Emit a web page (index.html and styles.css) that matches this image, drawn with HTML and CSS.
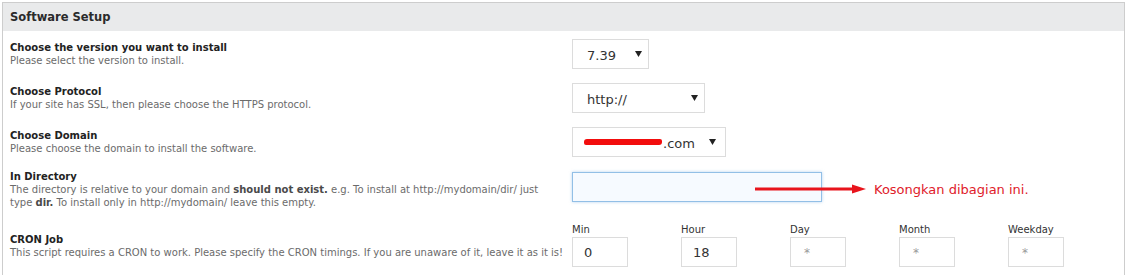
FILE: index.html
```html
<!DOCTYPE html>
<html lang="en">
<head>
<meta charset="utf-8">
<title>Software Setup</title>
<link rel="stylesheet" href="styles.css">
</head>
<body>
<div class="panel">
  <div class="panel-head">Software Setup</div>
  <div class="rows">
    <div class="row">
      <div class="label">
        <div class="label-title">Choose the version you want to install</div>
        <div class="label-desc">Please select the version to install.</div>
      </div>
      <div class="field">
        <div class="select select-version">
          <span class="select-value">7.39</span>
          <svg class="caret" width="7" height="6" viewBox="0 0 7 6"><polygon points="0,0 7,0 3.5,6" fill="#222"/></svg>
        </div>
      </div>
    </div>
    <div class="row">
      <div class="label">
        <div class="label-title">Choose Protocol</div>
        <div class="label-desc">If your site has SSL, then please choose the HTTPS protocol.</div>
      </div>
      <div class="field">
        <div class="select select-protocol">
          <span class="select-value">http://</span>
          <svg class="caret" width="7" height="6" viewBox="0 0 7 6"><polygon points="0,0 7,0 3.5,6" fill="#222"/></svg>
        </div>
      </div>
    </div>
    <div class="row">
      <div class="label">
        <div class="label-title">Choose Domain</div>
        <div class="label-desc">Please choose the domain to install the software.</div>
      </div>
      <div class="field">
        <div class="select select-domain">
          <span class="select-value"><span class="redact"></span>.com</span>
          <svg class="caret" width="7" height="6" viewBox="0 0 7 6"><polygon points="0,0 7,0 3.5,6" fill="#222"/></svg>
        </div>
      </div>
    </div>
    <div class="row row-dir">
      <div class="label">
        <div class="label-title">In Directory</div>
        <div class="label-desc label-desc-dir">The directory is relative to your domain and <b>should not exist.</b> e.g. To install at http://mydomain/dir/ just type <b>dir.</b> To install only in http://mydomain/ leave this empty.</div>
      </div>
      <div class="field field-dir">
        <div class="text-input text-input-focus"></div>
        <div class="note">
          <svg class="note-arrow" width="111" height="10" viewBox="0 0 111 10"><rect x="0" y="3.5" width="99" height="3" fill="#e8141c"/><polygon points="97,0.5 111,5 97,9.5" fill="#e8141c"/></svg>
          <span class="note-text">Kosongkan dibagian ini.</span>
        </div>
      </div>
    </div>
    <div class="row row-cron">
      <div class="label">
        <div class="label-title">CRON Job</div>
        <div class="label-desc">This script requires a CRON to work. Please specify the CRON timings. If you are unaware of it, leave it as it is!</div>
      </div>
      <div class="field cron">
        <div class="cron-item"><div class="cron-label">Min</div><div class="cron-box">0</div></div>
        <div class="cron-item"><div class="cron-label">Hour</div><div class="cron-box">18</div></div>
        <div class="cron-item"><div class="cron-label">Day</div><div class="cron-box cron-star">*</div></div>
        <div class="cron-item"><div class="cron-label">Month</div><div class="cron-box cron-star">*</div></div>
        <div class="cron-item"><div class="cron-label">Weekday</div><div class="cron-box cron-star">*</div></div>
      </div>
    </div>
  </div>
</div>
</body>
</html>
```
FILE: styles.css
```css
* { box-sizing: border-box; }
html, body { margin: 0; padding: 0; background: #fff; }
body { font-family: "DejaVu Sans", Verdana, sans-serif; color: #222; }

.panel {
  margin: 2px 1px 0 2px;
  border: 1px solid #cdcdcd;
  border-bottom: none;
  height: 273px;
  overflow: hidden;
}
.panel-head {
  height: 28px;
  line-height: 28px;
  padding-left: 7px;
  background: #e9eaeb;
  font-weight: bold;
  font-size: 11.5px;
  color: #2b2b2b;
}
.rows { padding-top: 1px; }
.row {
  display: grid;
  grid-template-columns: 562px 1fr;
  align-items: center;
  min-height: 44px;
  padding-left: 7px;
}
.label-title {
  font-size: 10px;
  font-weight: bold;
  line-height: 12px;
  color: #222;
}
.label-desc {
  font-size: 10px;
  line-height: 13px;
  color: #6b6b6b;
}
.label-desc b { color: #4a4a4a; }
.label-desc-dir { max-width: 548px; }

.field { position: relative; }

.select {
  height: 30px;
  border: 1px solid #dcdcdc;
  display: flex;
  align-items: center;
  justify-content: space-between;
  padding: 2px 6px 0 14px;
  font-size: 13px;
  color: #333;
  background: #fff;
}
.select .caret { margin-top: -3px; }
.select-version { width: 77px; }
.select-protocol { width: 133px; }
.select-domain { width: 154px; padding-right: 9px; padding-left: 11px; }
.select-value { display: flex; align-items: center; }
.redact {
  display: inline-block;
  width: 78px;
  height: 6px;
  margin-top: -2px;
  margin-right: 1px;
  background: #f20d0d;
  border-radius: 3px 2px 3px 2px;
}

.row-dir { align-items: start; }
.row-dir .label { margin-top: 7px; }
.row-dir .field { margin-top: 8px; }

.text-input {
  width: 250px;
  height: 30px;
  border: 1px solid #92bfe6;
  background: #f6faff;
}
.text-input-focus { box-shadow: 0 0 3px rgba(120, 175, 225, 0.55); }

.note {
  position: absolute;
  left: 183px;
  top: 7px;
  height: 20px;
  display: flex;
  align-items: center;
  white-space: nowrap;
}
.note-text {
  margin-left: 8px;
  font-size: 13px;
  color: #e0202a;
}

.row-cron { padding-top: 15px; align-items: start; }
.row-cron .label { align-self: center; margin-top: 2px; }
.cron {
  display: grid;
  grid-template-columns: repeat(5, 109px);
}
.cron-label {
  font-size: 10px;
  line-height: 12px;
  height: 13px;
  color: #333;
}
.cron-box {
  width: 56px;
  height: 30px;
  border: 1px solid #dcdcdc;
  font-size: 13px;
  line-height: 30px;
  padding-left: 11px;
  color: #333;
}
.cron-star { color: #999; padding-left: 13px; font-size: 12px; }
```
